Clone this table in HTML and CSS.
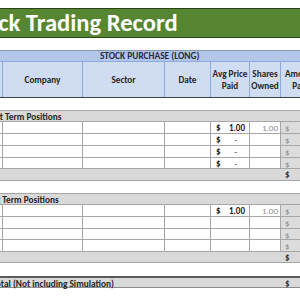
FILE: index.html
```html
<!DOCTYPE html>
<html>
<head>
<meta charset="utf-8">
<link rel="stylesheet" href="styles.css">
</head>
<body>
<div class="sheet">
  <div class="page">
    <div class="title"><span>Stock Trading Record</span></div>
    <div class="spacer"></div>
    <div class="row group-head"><span>STOCK PURCHASE (LONG)</span></div>
    <div class="row col-head">
      <div class="c"></div>
      <div class="c">Company</div>
      <div class="c">Sector</div>
      <div class="c">Date</div>
      <div class="c">Avg Price<br>Paid</div>
      <div class="c">Shares<br>Owned</div>
      <div class="c">Amount<br>Paid</div>
    </div>
    <div class="row blank"></div>
    <div class="row section"><span>Short Term Positions</span></div>
    <div class="row data">
      <div class="c"></div><div class="c"></div><div class="c"></div><div class="c"></div>
      <div class="c money"><span>$</span><span class="num">1.00</span></div>
      <div class="c shares">1.00</div>
      <div class="c amount">$</div>
    </div>
    <div class="row data">
      <div class="c"></div><div class="c"></div><div class="c"></div><div class="c"></div>
      <div class="c money"><span>$</span><span class="dash">-</span></div>
      <div class="c shares"></div>
      <div class="c amount">$</div>
    </div>
    <div class="row data">
      <div class="c"></div><div class="c"></div><div class="c"></div><div class="c"></div>
      <div class="c money"><span>$</span><span class="dash">-</span></div>
      <div class="c shares"></div>
      <div class="c amount">$</div>
    </div>
    <div class="row data short">
      <div class="c"></div><div class="c"></div><div class="c"></div><div class="c"></div>
      <div class="c money"><span>$</span><span class="dash">-</span></div>
      <div class="c shares"></div>
      <div class="c amount">$</div>
    </div>
    <div class="row subtotal"><div class="fill"></div><div class="amt">$</div></div>
    <div class="row blank"></div>
    <div class="row section"><span>Long Term Positions</span></div>
    <div class="row data">
      <div class="c"></div><div class="c"></div><div class="c"></div><div class="c"></div>
      <div class="c money"><span>$</span><span class="num">1.00</span></div>
      <div class="c shares">1.00</div>
      <div class="c amount">$</div>
    </div>
    <div class="row data">
      <div class="c"></div><div class="c"></div><div class="c"></div><div class="c"></div>
      <div class="c money"></div>
      <div class="c shares"></div>
      <div class="c amount">$</div>
    </div>
    <div class="row data short">
      <div class="c"></div><div class="c"></div><div class="c"></div><div class="c"></div>
      <div class="c money"></div>
      <div class="c shares"></div>
      <div class="c amount">$</div>
    </div>
    <div class="row data">
      <div class="c"></div><div class="c"></div><div class="c"></div><div class="c"></div>
      <div class="c money"></div>
      <div class="c shares"></div>
      <div class="c amount">$</div>
    </div>
    <div class="row subtotal short"><div class="fill"></div><div class="amt">$</div></div>
    <div class="row blank tall"></div>
    <div class="row grand"><div class="fill"><span>Total (Not including Simulation)</span></div><div class="amt">$</div></div>
  </div>
</div>
</body>
</html>
```

FILE: styles.css
```css
html, body {
  margin: 0;
  padding: 0;
  background: #ffffff;
  overflow: hidden;
}

.sheet {
  width: 300px;
  height: 300px;
  overflow: hidden;
  font-family: Carlito, Lato, "Liberation Sans", sans-serif;
  color: #262626;
}

.page {
  width: 361px;
  margin-left: -40px;
  padding-top: 8px;
}

.title {
  box-sizing: border-box;
  height: 30px;
  background: #578632;
  border: 1px solid #2a4418;
  color: #ffffff;
  font-weight: 700;
  font-size: 24.6px;
  line-height: 28px;
  padding-left: 4px;
  white-space: nowrap;
}

.spacer {
  height: 12px;
}

.row {
  box-sizing: border-box;
  display: grid;
  grid-template-columns: 43px 80px 82px 46px 39px 31px 40px;
  height: 12px;
  font-size: 9px;
  white-space: nowrap;
}

.c {
  box-sizing: border-box;
  border-right: 1px solid #a6a6a6;
  display: flex;
  align-items: center;
  overflow: hidden;
}

.group-head {
  display: flex;
  align-items: center;
  background: #b4c6e7;
  border-top: 1px solid #8497b0;
  border-bottom: 1px solid #8ea9db;
  padding-left: 140px;
  font-size: 9.4px;
  font-weight: 700;
  color: #1f2b45;
}

.col-head {
  height: 36px;
  background: #d0dcf2;
  border-bottom: 1px solid #404040;
  font-weight: 700;
  font-size: 9.2px;
  line-height: 12px;
  color: #262626;
}

.col-head .c {
  border-right: 1px solid #8ea9db;
  justify-content: center;
  text-align: center;
}

.blank {
  height: 12px;
  display: block;
}

.blank.tall {
  height: 13px;
}

.section {
  display: flex;
  align-items: center;
  background: #d9d9d9;
  border-top: 1px solid #a6a6a6;
  border-bottom: 1px solid #a6a6a6;
  padding-left: 22px;
  font-size: 9.3px;
  font-weight: 700;
  color: #262626;
}

.data {
  border-bottom: 1px solid #a6a6a6;
}

.data.short,
.subtotal.short {
  height: 11px;
}

.money {
  justify-content: space-between;
  padding: 0 4px 0 5px;
  font-weight: 700;
  color: #1a1a1a;
}

.money .dash {
  padding-right: 8px;
  font-weight: 400;
}

.shares {
  justify-content: flex-end;
  padding-right: 2px;
  color: #8c8c8c;
}

.amount {
  background: #dcdcdc;
  padding-left: 4px;
  color: #8c8c8c;
  border-right: none;
}

.subtotal,
.grand {
  grid-template-columns: 321px 40px;
  background: #d9d9d9;
  border-bottom: 1px solid #a6a6a6;
}

.fill {
  display: flex;
  align-items: center;
}

.amt {
  display: flex;
  align-items: center;
  padding-left: 4px;
  font-weight: 700;
  color: #333333;
}

.grand {
  border-top: 2px solid #595959;
  border-bottom: 1px solid #8c8c8c;
  height: 12px;
}

.grand .fill {
  padding-left: 32px;
  font-size: 9.3px;
  font-weight: 700;
  color: #262626;
}
```
